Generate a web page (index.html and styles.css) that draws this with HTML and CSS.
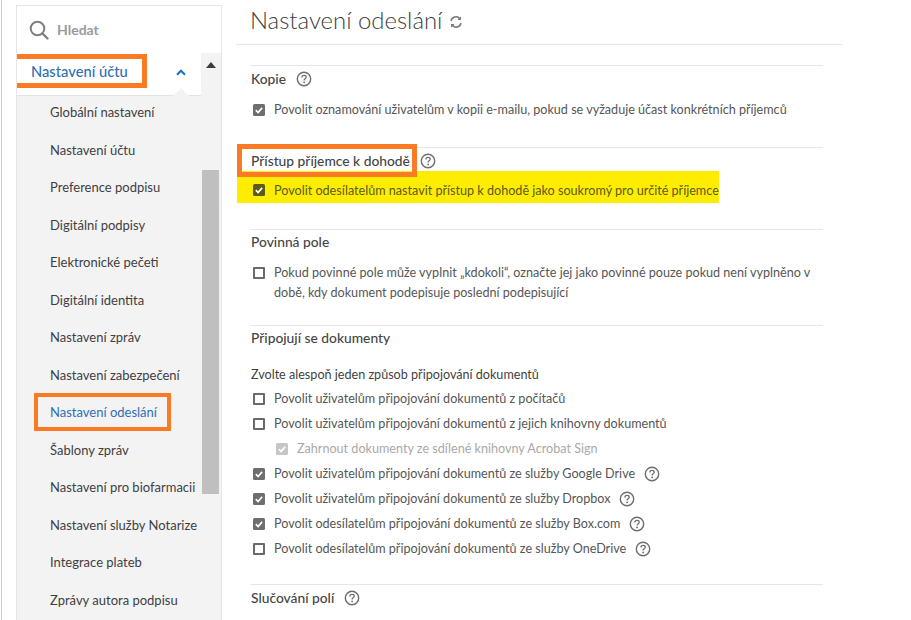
FILE: index.html
```html
<!DOCTYPE html>
<html lang="cs">
<head>
<meta charset="utf-8">
<title>Nastavení odeslání</title>
<link rel="stylesheet" href="styles.css">
</head>
<body>
<svg class="defs" width="0" height="0" aria-hidden="true">
  <symbol id="help" viewBox="0 0 16 16">
    <circle cx="8" cy="8" r="6.7" fill="none" stroke="#6e6e6e" stroke-width="1.4"/>
    <path d="M5.9 6.4c0-1.3 1-2 2.2-2s2.1.7 2.1 1.8c0 1.6-2.1 1.6-2.1 3.3" fill="none" stroke="#6e6e6e" stroke-width="1.3"/>
    <circle cx="8.1" cy="11.4" r=".9" fill="#6e6e6e"/>
  </symbol>
  <symbol id="tick" viewBox="0 0 12 12">
    <rect width="12" height="12" rx="1.5" fill="currentColor"/>
    <path d="M2.8 6.2l2.3 2.3 4-4.6" fill="none" stroke="#fff" stroke-width="1.7"/>
  </symbol>
</svg>
<div class="page">
  <aside class="side">
    <div class="search">
      <svg class="search-icon" viewBox="0 0 20 20" width="20" height="20"><circle cx="8.5" cy="8.5" r="6.8" fill="none" stroke="#808080" stroke-width="2"/><path d="M13.5 13.5l5 5" stroke="#808080" stroke-width="2.4" stroke-linecap="round"/></svg>
      <span>Hledat</span>
    </div>
    <div class="scrollarea">
      <div class="menu">
        <div class="menu-head">
          <span>Nastavení účtu</span>
          <svg class="chev" viewBox="0 0 10 7" width="10" height="7"><path d="M1 5.7l4-4 4 4" fill="none" stroke="#1473c6" stroke-width="2"/></svg>
        </div>
        <ul class="items">
          <li>Globální nastavení</li>
          <li>Nastavení účtu</li>
          <li>Preference podpisu</li>
          <li>Digitální podpisy</li>
          <li>Elektronické pečeti</li>
          <li>Digitální identita</li>
          <li>Nastavení zpráv</li>
          <li>Nastavení zabezpečení</li>
          <li class="current">Nastavení odeslání</li>
          <li>Šablony zpráv</li>
          <li>Nastavení pro biofarmacii</li>
          <li>Nastavení služby Notarize</li>
          <li>Integrace plateb</li>
          <li>Zprávy autora podpisu</li>
        </ul>
      </div>
      <div class="scrollbar">
        <span class="arrow"></span>
        <span class="thumb"></span>
      </div>
    </div>
    <span class="mark mark-head"></span>
    <span class="mark mark-item"></span>
  </aside>

  <main class="main">
    <header class="title">
      <h1>Nastavení odeslání</h1>
      <svg class="refresh" viewBox="0 0 14 14" width="14" height="14"><path d="M2 6a5 5 0 0 1 9-2M12 8a5 5 0 0 1-9 2" fill="none" stroke="#777" stroke-width="1.5"/><path d="M12 1.500v3.600H8.400zM2 12.500V8.900h3.600z" fill="#777"/></svg>
    </header>

    <section class="block first">
      <h2>Kopie <svg class="help"><use href="#help"/></svg></h2>
      <div class="row"><svg class="box"><use href="#tick"/></svg><span>Povolit oznamování uživatelům v kopii e-mailu, pokud se vyžaduje účast konkrétních příjemců</span></div>
    </section>

    <section class="block access">
      <h2><span class="boxed">Přístup příjemce k dohodě</span> <svg class="help"><use href="#help"/></svg></h2>
      <div class="row marked"><svg class="box"><use href="#tick"/></svg><span>Povolit odesílatelům nastavit přístup k dohodě jako soukromý pro určité příjemce</span></div>
    </section>

    <section class="block required">
      <h2>Povinná pole</h2>
      <div class="row tall"><i class="box empty"></i><span>Pokud povinné pole může vyplnit „kdokoli“, označte jej jako povinné pouze pokud není vyplněno v době, kdy dokument podepisuje poslední podepisující</span></div>
    </section>

    <section class="block attach">
      <h2>Připojují se dokumenty</h2>
      <p class="lead">Zvolte alespoň jeden způsob připojování dokumentů</p>
      <div class="row"><i class="box empty"></i><span>Povolit uživatelům připojování dokumentů z počítačů</span></div>
      <div class="row"><i class="box empty"></i><span>Povolit uživatelům připojování dokumentů z jejich knihovny dokumentů</span></div>
      <div class="row sub"><svg class="box"><use href="#tick"/></svg><span>Zahrnout dokumenty ze sdílené knihovny Acrobat Sign</span></div>
      <div class="row"><svg class="box"><use href="#tick"/></svg><span>Povolit uživatelům připojování dokumentů ze služby Google Drive</span><svg class="help"><use href="#help"/></svg></div>
      <div class="row"><svg class="box"><use href="#tick"/></svg><span>Povolit uživatelům připojování dokumentů ze služby Dropbox</span><svg class="help"><use href="#help"/></svg></div>
      <div class="row"><svg class="box"><use href="#tick"/></svg><span>Povolit odesílatelům připojování dokumentů ze služby Box.com</span><svg class="help"><use href="#help"/></svg></div>
      <div class="row"><i class="box empty"></i><span>Povolit odesílatelům připojování dokumentů ze služby OneDrive</span><svg class="help"><use href="#help"/></svg></div>
    </section>

    <section class="block merge">
      <h2>Slučování polí <svg class="help"><use href="#help"/></svg></h2>
    </section>
  </main>
</div>
</body>
</html>
```
FILE: styles.css
```css
* { box-sizing: border-box; }
html, body { margin: 0; height: 100%; overflow: hidden; background: #fff; }
body { font-family: "Lato", "Open Sans", sans-serif; color: #4b4b4b; font-size: 12.6px; }
.defs { position: absolute; }
.page { display: flex; height: 620px; margin-left: 1px; border-left: 1px solid #cfcfcf; }

.side { position: relative; flex: none; width: 206px; height: 615px; margin: 5px 0 0 14px; border: 1px solid #e6e6e6; border-bottom: 0; display: flex; flex-direction: column; }
.search { flex: none; height: 47px; display: flex; align-items: center; gap: 8px; padding: 0 0 0 12px; color: #9a9a9a; font-weight: 700; font-size: 14px; }
.scrollarea { flex: 1; min-height: 0; display: flex; background: #f3f3f3; }
.menu { flex: none; width: 184px; }
.menu-head { position: relative; height: 43px; background: #fff; display: flex; align-items: center; justify-content: space-between; padding: 0 15px 6px 14px; color: #2f6fb5; font-size: 14.7px; font-weight: 500; border-bottom: 1px solid #e4e4e4; }
.menu-head::after { content: ""; position: absolute; right: 12px; bottom: -1px; border: 8px solid transparent; border-top: 0; border-bottom-color: #f3f3f3; }
.chev { margin-top: 2px; }
.items { list-style: none; margin: -2px 0 0; padding: 0 0 0 33px; color: #3f3f3f; white-space: nowrap; font-size: 13px; }
.items li { height: 37.5px; line-height: 37.5px; }
.items .current { color: #2f6fb5; }
.scrollbar { flex: 1; position: relative; }
.arrow { position: absolute; left: 5px; top: 9px; border: 5px solid transparent; border-top: 0; border-bottom: 6px solid #3c3c3c; }
.thumb { position: absolute; left: 1px; right: 2px; top: 117px; height: 324px; background: #bfbfbf; }

.mark { position: absolute; border: 4px solid #fb7b24; pointer-events: none; }
.mark-head { left: 0; top: 48px; width: 130px; height: 34px; border-width: 5px 5px 5px 0; }
.mark-item { left: 17px; top: 387px; width: 137px; height: 38px; }

.main { flex: none; width: 606px; margin-left: 14px; padding: 0; }
.title { height: 45px; border-bottom: 1px solid #e6e6e6; padding: 0 0 4px 14px; display: flex; align-items: center; gap: 7px; }
h1 { margin: 0; font-size: 23.9px; font-weight: 300; color: #404040; line-height: 30px; }
.refresh { margin-top: 3px; }

.block { margin: 0 19px 0 15px; border-top: 1px solid #e6e6e6; }
h2 { margin: 0; font-size: 13.8px; font-weight: 500; color: #454545; display: flex; align-items: center; gap: 5px; line-height: 20px; }
.help { width: 16px; height: 16px; flex: none; }
h2 .help { margin-left: 5px; }
.row .help { margin-left: 9px; }
.row { display: flex; align-items: center; height: 25px; color: #565656; }
.box { width: 12px; height: 12px; flex: none; margin: 0 9px 0 2px; color: #6e6e6e; }
.box.empty { display: block; border: 2px solid #6a6a6a; border-radius: 1px; background: #fff; }

.first { margin-top: 20px; height: 82px; padding-top: 3px; }
.first h2 { margin-bottom: 8px; }
.access { height: 82px; padding-top: 3px; }
.access .boxed { display: inline-block; }
.row.marked { background: #ffed00; margin: 0 0 0 -14px; padding: 6px 0 0 14px; width: 482px; height: 32px; color: #5a5a1e; }
.marked .box { color: #5c5c18; }
.required { height: 96px; padding-top: 2px; }
.required h2 { margin-bottom: 11px; }
.row.tall { height: auto; align-items: flex-start; line-height: 20px; }
.row.tall .box { margin-top: 4px; }
.attach { height: 259px; padding-top: 2px; }
.lead { margin: 17px 0 1px; line-height: 20px; color: #3f3f3f; }
.sub { padding-left: 23px; color: #a9a9a9; }
.sub .box { color: #c6c6c6; }
.merge { padding-top: 3px; }
.boxed { position: relative; }
.boxed::after { content: ""; position: absolute; box-sizing: border-box; left: -14px; top: -7px; width: 180px; height: 33px; border: 5px solid #fb7b24; }
```
